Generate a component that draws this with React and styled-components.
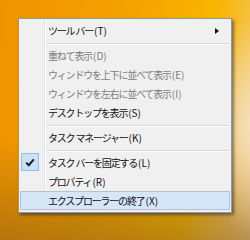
import React from 'react';
import styled, { createGlobalStyle } from 'styled-components';

const GlobalStyle = createGlobalStyle`
  html, body {
    margin: 0;
    padding: 0;
  }
  body {
    font-family: "Noto Sans CJK JP", "Noto Sans", sans-serif;
  }
`;

const Desktop = styled.div`
  width: 250px;
  height: 240px;
  box-sizing: border-box;
  padding: 18px 0 0 18px;
  overflow: hidden;
  background:
    radial-gradient(ellipse 60px 110px at 258px 125px, #f5e2c6 0%, rgba(245, 226, 198, 0) 100%),
    linear-gradient(180deg, rgba(0, 0, 0, 0) 58%, rgba(110, 75, 25, 0.45) 100%),
    linear-gradient(100deg, #ef9200 0%, #f4a200 45%, #f8b600 75%, #f2cb88 100%);
`;

const Menu = styled.div`
  position: relative;
  width: 214px;
  box-sizing: border-box;
  padding: 2px 0;
  background: #f0f0f0;
  border: 1px solid #979797;
  box-shadow: 2px 2px 3px rgba(0, 0, 0, 0.45);

  &::before {
    content: '';
    position: absolute;
    top: 0;
    bottom: 0;
    left: 25px;
    width: 1px;
    background: #e2e2e2;
    box-shadow: 1px 0 0 #ffffff;
  }
`;

const Item = styled.div`
  position: relative;
  display: grid;
  grid-template-columns: 23px 1fr 16px;
  column-gap: 4px;
  align-items: center;
  height: 19px;
  box-sizing: border-box;
  margin: 0 1px;
  border: 1px solid ${p => (p.$active ? '#a6c4e4' : 'transparent')};
  background: ${p => (p.$active ? '#d5e6f7' : 'transparent')};
  color: ${p => (p.$disabled ? '#7c7c7c' : '#111111')};
  font-size: 10px;
  white-space: nowrap;
`;

const Label = styled.span`
  line-height: 17px;
  letter-spacing: -1.2px;
`;

const Accel = styled.span`
  letter-spacing: 0;
  margin-left: 1px;
`;

const Separator = styled.div`
  height: 6px;
  margin: 0 2px 0 26px;
  display: flex;
  align-items: center;

  &::after {
    content: '';
    flex: 1;
    height: 1px;
    background: #d7d7d7;
    box-shadow: 0 1px 0 #ffffff;
  }
`;

const CheckBox = styled.span`
  width: 18px;
  height: 18px;
  box-sizing: border-box;
  margin-top: -1px;
  border: 1px solid #92bde6;
  background: #c9e0f5;
  display: flex;
  align-items: center;
  justify-content: center;
`;

const Arrow = styled.span`
  justify-self: start;
  margin-left: 2px;
  width: 0;
  height: 0;
  border-left: 4px solid #111;
  border-top: 3.5px solid transparent;
  border-bottom: 3.5px solid transparent;
`;

const items = [
  { label: 'ツール バー', key: 'T', submenu: true },
  { sep: true },
  { label: '重ねて表示', key: 'D', disabled: true },
  { label: 'ウィンドウを上下に並べて表示', key: 'E', disabled: true },
  { label: 'ウィンドウを左右に並べて表示', key: 'I', disabled: true },
  { label: 'デスクトップを表示', key: 'S' },
  { sep: true },
  { label: 'タスク マネージャー', key: 'K' },
  { sep: true },
  { label: 'タスク バーを固定する', key: 'L', checked: true },
  { label: 'プロパティ', key: 'R' },
  { label: 'エクスプローラーの終了', key: 'X', active: true },
];

function Check() {
  return (
    <CheckBox>
      <svg width="10" height="9" viewBox="0 0 10 9">
        <path d="M1.2 4.6 L3.8 7.2 L8.8 1.4" fill="none" stroke="#1b1b1b" strokeWidth="2" />
      </svg>
    </CheckBox>
  );
}

export default function App() {
  return (
    <>
      <GlobalStyle />
      <Desktop>
        <Menu>
          {items.map((it, i) =>
            it.sep ? (
              <Separator key={i} />
            ) : (
              <Item key={i} $disabled={it.disabled} $active={it.active}>
                <span>{it.checked && <Check />}</span>
                <Label>
                  {it.label}
                  <Accel>({it.key})</Accel>
                </Label>
                {it.submenu ? <Arrow /> : <span />}
              </Item>
            )
          )}
        </Menu>
      </Desktop>
    </>
  );
}
